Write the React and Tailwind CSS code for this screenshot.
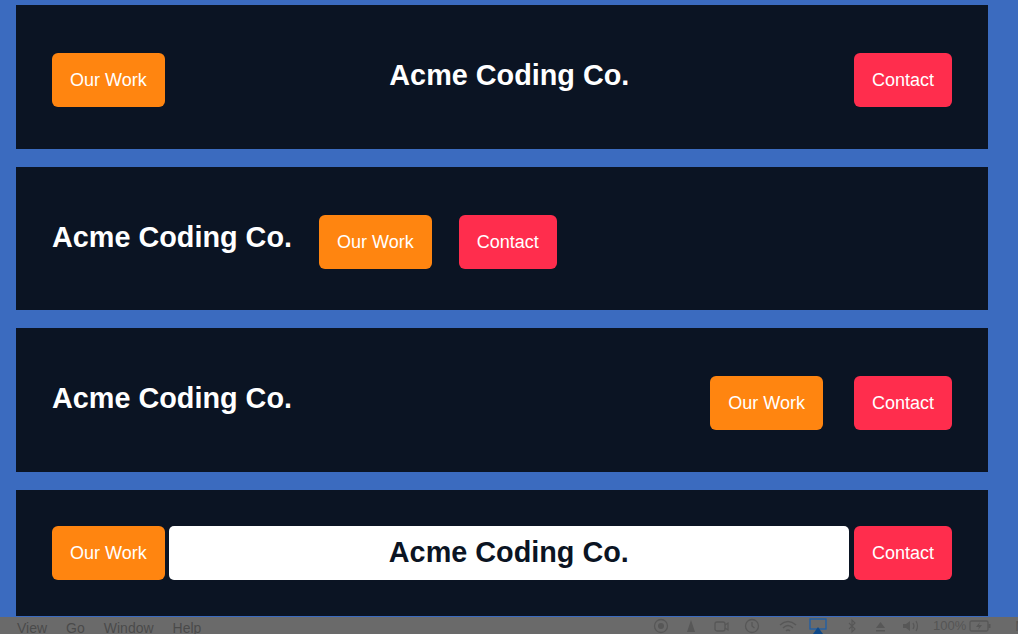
import React from "react";

const font = { fontFamily: '"Liberation Sans", Arial, Helvetica, sans-serif' };

function Btn({ children, color, className = "" }) {
  return (
    <button
      className={`h-[54px] shrink-0 rounded-[6px] px-[18px] text-[18px] leading-[20px] text-white ${color} ${className}`}
    >
      {children}
    </button>
  );
}

const Work = ({ className = "" }) => (
  <Btn color="bg-[#ff8510]" className={className}>Our Work</Btn>
);
const Contact = ({ className = "" }) => (
  <Btn color="bg-[#ff2d4d]" className={className}>Contact</Btn>
);

const Title = ({ className = "" }) => (
  <h1 className={`whitespace-nowrap text-[28.8px] font-bold leading-[33px] text-white ${className}`}>
    Acme Coding Co.
  </h1>
);

function Panel({ children, className = "" }) {
  return (
    <div className={`flex h-[143.5px] shrink-0 bg-[#0b1423] px-[36px] ${className}`}>
      {children}
    </div>
  );
}

function MenuIcons() {
  const s = "#575757";
  return (
    <div className="flex items-center">
      <svg width="16" height="16" viewBox="0 0 16 16" className="ml-[653px]">
        <circle cx="8" cy="8" r="6.5" fill="none" stroke={s} strokeWidth="1.3" />
        <circle cx="8" cy="8" r="3" fill={s} />
      </svg>
      <svg width="12" height="16" viewBox="0 0 12 16" className="ml-[16px]">
        <path d="M6 2 L10 14 L2 14 Z" fill={s} />
      </svg>
      <svg width="16" height="16" viewBox="0 0 16 16" className="ml-[16px]">
        <rect x="2" y="4" width="10" height="9" rx="2" fill="none" stroke={s} strokeWidth="1.3" />
        <path d="M12 7 L15 5 L15 12 L12 10" fill="none" stroke={s} strokeWidth="1.2" />
      </svg>
      <svg width="16" height="16" viewBox="0 0 16 16" className="ml-[15px]">
        <circle cx="8" cy="8" r="6.5" fill="none" stroke={s} strokeWidth="1.3" />
        <path d="M8 4 V8 L10.5 10" fill="none" stroke={s} strokeWidth="1.3" />
      </svg>
      <svg width="20" height="16" viewBox="0 0 20 16" className="ml-[18px]">
        <path d="M2 7 Q10 0 18 7" fill="none" stroke={s} strokeWidth="1.5" />
        <path d="M5 10 Q10 5 15 10" fill="none" stroke={s} strokeWidth="1.5" />
        <path d="M8 13 Q10 11 12 13" fill="none" stroke={s} strokeWidth="1.5" />
      </svg>
      <svg width="18" height="16" viewBox="0 0 18 16" className="ml-[11px]">
        <rect x="1" y="1" width="16" height="10" fill="none" stroke="#1d5ea8" strokeWidth="1.3" />
        <path d="M9 9 L14 16 L4 16 Z" fill="#0f4a8a" />
      </svg>
      <svg width="10" height="16" viewBox="0 0 10 16" className="ml-[20px]">
        <path d="M2 5 L8 11 L5 14 L5 2 L8 5 L2 11" fill="none" stroke={s} strokeWidth="1.1" />
      </svg>
      <svg width="11" height="16" viewBox="0 0 11 16" className="ml-[18px]">
        <path d="M5.5 4 L10 10 L1 10 Z" fill={s} />
        <rect x="1" y="12" width="9" height="1.5" fill={s} />
      </svg>
      <svg width="20" height="16" viewBox="0 0 20 16" className="ml-[15px]">
        <path d="M2 6 H5 L9 3 V13 L5 10 H2 Z" fill={s} />
        <path d="M12 5 Q14 8 12 11" fill="none" stroke={s} strokeWidth="1.2" />
        <path d="M15 3 Q18 8 15 13" fill="none" stroke={s} strokeWidth="1.2" />
      </svg>
      <span className="ml-[12px] text-[13px] leading-[16px] text-[#555]">100%</span>
      <svg width="22" height="16" viewBox="0 0 22 16" className="ml-[3px]">
        <rect x="1" y="3" width="18" height="10" rx="1.5" fill="none" stroke={s} strokeWidth="1.3" />
        <rect x="19.5" y="6" width="2" height="4" fill={s} />
        <path d="M11 4 L7 9 H10 L9 12 L13 7 H10 Z" fill={s} />
      </svg>
      <span className="ml-[24px] text-[14px] leading-[16px] text-[#555]">M</span>
    </div>
  );
}

export default function App() {
  return (
    <div className="relative h-[634px] w-[1018px] overflow-hidden bg-[#3b6bbf]" style={font}>
      <div className="flex flex-col gap-[18px] pl-[16px] pr-[30px] pt-[5px]">
        <Panel className="items-center">
          <Work className="mt-[6.5px]" />
          <div className="flex flex-1 justify-center">
            <Title className="mb-[2px]" />
          </div>
          <Contact className="mt-[6.5px]" />
        </Panel>

        <Panel className="items-center">
          <Title className="mb-[2px]" />
          <Work className="ml-[27px] mt-[6.5px]" />
          <Contact className="ml-[27px] mt-[6.5px]" />
        </Panel>

        <Panel className="items-center">
          <Title className="mb-[2px]" />
          <div className="flex-1" />
          <Work className="mt-[6.5px]" />
          <Contact className="ml-[31px] mt-[6.5px]" />
        </Panel>

        <Panel className="items-start pt-[36px]">
          <Work />
          <div className="ml-[4px] mr-[5px] flex h-[54px] flex-1 items-center justify-center rounded-[5px] bg-white">
            <h1 className="whitespace-nowrap text-[28.8px] font-bold leading-[33px] text-[#0b1423]">
              Acme Coding Co.
            </h1>
          </div>
          <Contact />
        </Panel>
      </div>

      <div className="absolute left-0 right-0 top-[616px] h-[18px] border-t border-[#3b6bbf] bg-[#6a6a6a]">
        <div className="absolute left-0 top-[3px] flex text-[14px] leading-[16px] text-[#4a4a4a]">
          <span className="ml-[17px]">View</span>
          <span className="ml-[19px]">Go</span>
          <span className="ml-[19px]">Window</span>
          <span className="ml-[19px]">Help</span>
        </div>
        <div className="absolute left-0 top-[1px]">
          <MenuIcons />
        </div>
      </div>
    </div>
  );
}
